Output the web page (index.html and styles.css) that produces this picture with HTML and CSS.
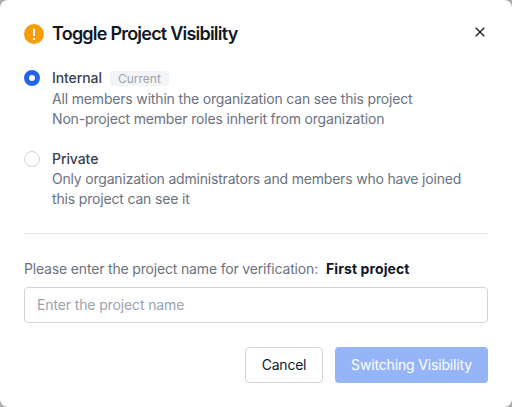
FILE: index.html
```html
<!DOCTYPE html>
<html lang="en">
<head>
<meta charset="utf-8">
<title>Toggle Project Visibility</title>
<link rel="stylesheet" href="styles.css">
</head>
<body>
<main class="dialog">
  <header class="header">
    <svg class="warn" viewBox="0 0 20 20"><circle cx="10" cy="10" r="10" fill="#f59e0b"/><path d="M9 4.7h2v7.3h-2zM9 14h2v2h-2z" fill="#fff"/></svg>
    <h1 class="title">Toggle Project Visibility</h1>
    <svg class="close" viewBox="0 0 16 16"><path d="M3.7 3.7l8.6 8.6M12.3 3.7l-8.6 8.6" stroke="#111827" stroke-width="1.25"/></svg>
  </header>
  <section class="options">
    <div class="option">
      <span class="radio checked"></span>
      <div class="text">
        <div class="name tagged"><span>Internal</span><span class="tag">Current</span></div>
        <p>All members within the organization can see this project<br>Non-project member roles inherit from organization</p>
      </div>
    </div>
    <div class="option">
      <span class="radio"></span>
      <div class="text">
        <div class="name private">Private</div>
        <p><span class="long">Only organization administrators and members who have joined</span><br>this project can see it</p>
      </div>
    </div>
  </section>
  <hr class="rule">
  <label class="label" for="name"><span class="prompt">Please enter the project name for verification:</span><strong>First project</strong></label>
  <input class="input" id="name" placeholder="Enter the project name">
  <footer class="footer">
    <button class="btn cancel">Cancel</button>
    <button class="btn primary">Switching Visibility</button>
  </footer>
</main>
</body>
</html>
```
FILE: styles.css
```css
* { box-sizing: border-box; }
body { margin: 0; background: #adadad; font: 14px/20px Inter, sans-serif; color: #111827; }
.dialog { height: 407px; padding: 20px 24px 24px; background: #fff; border-radius: 8px; }
.header { display: flex; align-items: center; height: 28px; }
.warn { width: 20px; height: 20px; margin-right: 8px; }
.title { flex: 1; margin: 0; font-size: 18px; line-height: 28px; font-weight: 600; letter-spacing: -0.78px; }
.close { width: 16px; height: 16px; margin-top: -4px; }
.options { display: flex; flex-direction: column; gap: 20px; margin-top: 20px; }
.option { display: flex; gap: 12px; }
.radio { width: 16px; height: 16px; margin-top: 2px; border: 1px solid #d1d5db; border-radius: 50%; }
.checked { border: 5px solid #2563eb; }
.name { display: flex; gap: 8px; height: 20px; color: #374151; font-weight: 500; letter-spacing: -0.08px; }
.tagged { height: 21px; }
.private { line-height: 19px; color: #374151; }
.tag { height: 15px; margin-top: 3px; padding: 0 8px; border-radius: 3px; background: #f3f4f6; color: #9ca3af; font-size: 12px; line-height: 15px; font-weight: 400; letter-spacing: 0; }
p { margin: 0; color: #6b7280; white-space: nowrap; letter-spacing: -0.17px; }
.long { letter-spacing: -0.195px; }
.rule { height: 1px; margin: 24px 0; border: 0; background: #e5e7eb; }
.label { display: flex; gap: 8px; height: 20px; margin-top: 25px; color: #6b7280; white-space: nowrap; }
.prompt { letter-spacing: -0.17px; }
.label strong { color: #111827; font-weight: 700; letter-spacing: 0.1px; }
.input { display: block; width: 100%; height: 36px; margin-top: 8px; padding: 0 12px 1px; border: 1px solid #d1d5db; border-radius: 4px; font: inherit; letter-spacing: -0.13px; }
.input::placeholder { color: #9ca3af; opacity: 1; }
.footer { display: flex; justify-content: flex-end; gap: 12px; margin-top: 24px; }
.btn { height: 36px; border: 1px solid #d1d5db; border-radius: 4px; padding: 0; background: #fff; color: #111827; font: inherit; letter-spacing: -0.16px; }
.cancel { width: 78px; letter-spacing: -0.22px; }
.primary { width: 153px; border: 0; background: #95b5f7; color: #fff; }
```
